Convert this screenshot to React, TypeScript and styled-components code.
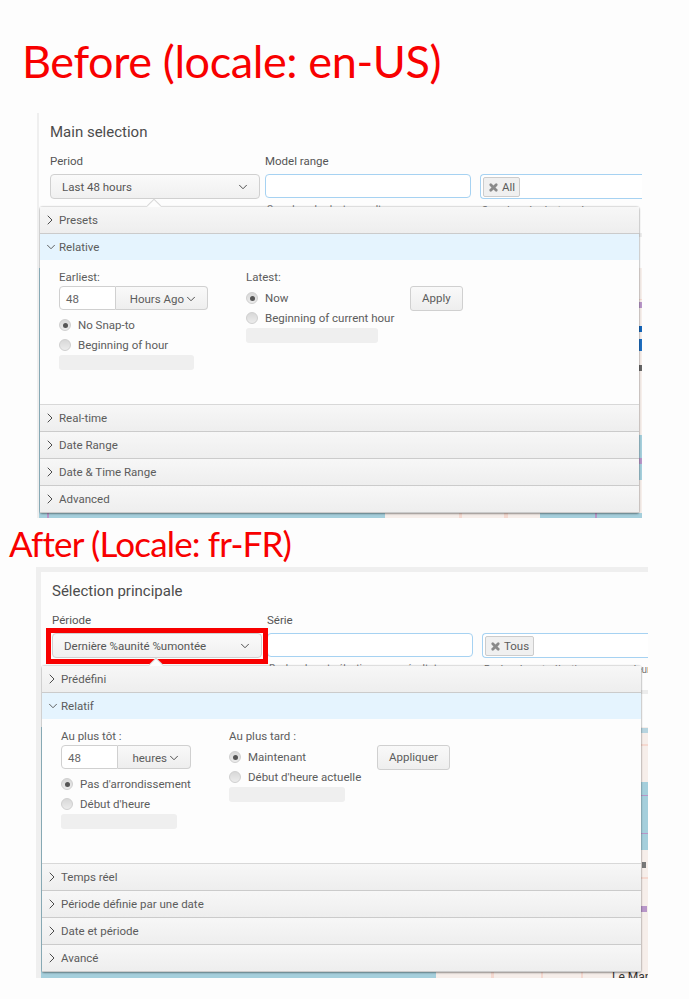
import React from 'react';
import styled, {createGlobalStyle} from 'styled-components';
import {ChevronDown, ChevronRight, X} from 'lucide-react';

const GlobalStyle = createGlobalStyle`
    html, body {
        margin: 0;
        padding: 0;
        background: #fdfdfd;
    }`;

const Page = styled.div`
    width: 689px;
    height: 999px;
    overflow: hidden;
    display: flex;
    flex-direction: column;
    font-family: Roboto, "Liberation Sans", sans-serif;
    font-size: 12px;
    color: #5a5a5a;`;

const Heading = styled.h1<{$size: number, $spacing: number, $indent: number, $height: number, $drop: number}>`
    box-sizing: border-box;
    margin: 0;
    height: ${p => p.$height}px;
    padding: ${p => p.$drop}px 0 0 ${p => p.$indent}px;
    display: flex;
    align-items: center;
    font-family: Lato, "Open Sans", sans-serif;
    font-weight: 400;
    font-size: ${p => p.$size}px;
    letter-spacing: ${p => p.$spacing}px;
    color: #f80000;
    white-space: nowrap;`;

const Panel = styled.section<{$left: number, $width: number, $height: number, $frameTop: number, $frameLeft: number}>`
    position: relative;
    box-sizing: border-box;
    margin-left: ${p => p.$left}px;
    width: ${p => p.$width}px;
    height: ${p => p.$height}px;
    flex: none;
    overflow: hidden;
    border-top: ${p => p.$frameTop}px solid #efefef;
    border-left: ${p => p.$frameLeft}px solid #efefef;
    background: #fdfdfd;`;

const MapBackdrop = styled.svg`
    position: absolute;
    left: 0;
    top: 0;`;

const Form = styled.div`
    position: relative;
    padding: 9px 0 0 11px;`;

const Title = styled.h2`
    margin: 0;
    height: 20px;
    line-height: 20px;
    font-size: 15px;
    font-weight: 400;
    color: #4c4c4c;`;

const Fields = styled.div`
    display: flex;
    margin-top: 11px;`;

const Field = styled.div<{$width: number, $gap: number}>`
    flex: none;
    width: ${p => p.$width}px;
    margin-right: ${p => p.$gap}px;`;

const FieldLabel = styled.div`
    height: 21px;
    line-height: 16px;
    font-size: 11.5px;
    color: #555;
    white-space: nowrap;`;

const Hint = styled.div`
    margin-top: 6px;
    padding-left: 2px;
    font-size: 10px;
    color: #777;
    white-space: nowrap;`;

const PeriodSelect = styled.div<{$highlight?: boolean}>`
    position: relative;
    box-sizing: border-box;
    height: 25px;
    padding: 0 9px 0 11px;
    display: flex;
    align-items: center;
    justify-content: space-between;
    border: 1px solid #d0d0d0;
    border-radius: 4px;
    background: linear-gradient(#fafafa, #f0f0f0);
    color: #565656;
    font-size: 11.5px;

    svg {
        color: #444;
    }

    ${p => p.$highlight ? `
    &::after {
        content: '';
        position: absolute;
        inset: -6px -7px -7px -7px;
        border: 5px solid #f80000;
    }` : ''}`;

const TextBox = styled.div`
    box-sizing: border-box;
    height: 24px;
    border: 1px solid #a6d2f2;
    border-radius: 4px;
    background: #fff;`;

const TagBox = styled.div`
    box-sizing: border-box;
    height: 25px;
    width: 200px;
    padding: 2px;
    border: 1px solid #a6d2f2;
    border-right: 0;
    border-radius: 4px 0 0 4px;
    background: #fff;`;

const Tag = styled.span`
    box-sizing: border-box;
    height: 20px;
    padding: 0 4px;
    display: inline-flex;
    align-items: center;
    gap: 3px;
    border: 1px solid #ccc;
    border-radius: 2px;
    background: #f0f0f0;
    color: #5c5c5c;
    font-size: 11.5px;`;

const Popover = styled.div`
    position: absolute;
    left: 1px;
    top: 94px;
    width: 599px;
    height: 306px;
    display: flex;
    flex-direction: column;
    background: #fdfdfd;
    border-radius: 2px;
    box-shadow: 0 0 2px rgba(0, 0, 0, 0.4), 0 1px 2px rgba(0, 0, 0, 0.3);

    &::before {
        content: '';
        position: absolute;
        left: 109px;
        top: -5px;
        width: 10px;
        height: 10px;
        transform: rotate(45deg);
        background: #fdfdfd;
        box-shadow: -1px -1px 0 #d8d8d8;
    }`;

const SectionRow = styled.div<{$open?: boolean}>`
    position: relative;
    box-sizing: border-box;
    flex: none;
    height: ${p => p.$open ? 26 : 27}px;
    padding-left: 2px;
    display: flex;
    align-items: center;
    border-bottom: ${p => p.$open ? '0' : '1px solid #cbcbcb'};
    background: ${p => p.$open ? '#e5f4fe' : 'linear-gradient(#f7f7f7, #eeeeee)'};
    color: #5c5c5c;
    font-size: 11.5px;`;

const RowIcon = styled.span<{$shift?: number}>`
    width: 17px;
    display: flex;
    padding-left: ${p => p.$shift ?? 0}px;
    box-sizing: border-box;
    color: #4c4c4c;`;

const Relative = styled.div<{$columns: string}>`
    flex: 1;
    box-sizing: border-box;
    padding: 11px 0 0 19px;
    display: grid;
    grid-template-columns: ${p => p.$columns};
    align-items: start;
    border-bottom: 1px solid #d8d8d8;`;

const Column = styled.div`
    display: flex;
    flex-direction: column;`;

const ColumnLabel = styled.div<{$below: number}>`
    height: 15px;
    margin-bottom: ${p => p.$below}px;
    line-height: 12px;
    font-size: 11.5px;
    color: #5c5c5c;
    white-space: nowrap;`;

const AmountGroup = styled.div`
    display: flex;
    height: 24px;
    margin-bottom: 5px;`;

const AmountInput = styled.div`
    box-sizing: border-box;
    width: 57px;
    padding: 1px 0 0 6px;
    line-height: 22px;
    border: 1px solid #d0d0d0;
    border-radius: 4px 0 0 4px;
    background: #fff;
    font-size: 11.5px;
    color: #666;`;

const UnitSelect = styled.div<{$width: number}>`
    box-sizing: border-box;
    width: ${p => p.$width}px;
    padding: 1px 9px 0 0;
    display: flex;
    align-items: center;
    justify-content: flex-end;
    border: 1px solid #d0d0d0;
    border-left: 0;
    border-radius: 0 4px 4px 0;
    background: linear-gradient(#f9f9f9, #eeeeee);
    font-size: 11.5px;
    color: #5c5c5c;

    svg {
        color: #444;
    }`;

const RadioRow = styled.div`
    height: 20px;
    display: flex;
    align-items: center;
    gap: 7px;
    font-size: 11.5px;
    color: #5c5c5c;
    white-space: nowrap;`;

const RadioDot = styled.span<{$checked?: boolean}>`
    position: relative;
    flex: none;
    width: 12px;
    height: 12px;
    border-radius: 50%;
    border: 1px solid #cfcfcf;
    box-sizing: border-box;
    background: linear-gradient(#d8d8d8, #ececec);

    &::after {
        content: '';
        display: ${p => p.$checked ? 'block' : 'none'};
        position: absolute;
        left: 2.5px;
        top: 2.5px;
        width: 5px;
        height: 5px;
        border-radius: 50%;
        background: #555;
    }`;

const Placeholder = styled.div<{$width: number}>`
    width: ${p => p.$width}px;
    height: 15px;
    border-radius: 3px;
    background: #efefef;`;

const ApplyButton = styled.div`
    justify-self: start;
    box-sizing: border-box;
    height: 25px;
    margin-top: 15px;
    padding: 0 11px;
    line-height: 23px;
    border: 1px solid #d0d0d0;
    border-radius: 3px;
    background: linear-gradient(#f9f9f9, #eeeeee);
    font-size: 11.5px;
    color: #5c5c5c;`;

interface MapPatch {
    x: number,
    y: number,
    w: number,
    h: number,
    color: string
}

interface PanelContent {
    title: string,
    periodLabel: string,
    period: string,
    series: string,
    tag: string,
    seriesHint: string,
    tagHint: string,
    sections: string[],
    relative: string,
    earliest: string,
    unit: string,
    unitWidth: number,
    noSnap: string,
    beginHour: string,
    latest: string,
    now: string,
    beginCurrent: string,
    apply: string,
    columns: string,
    snapBar: number,
    latestBar: number
}

const water = '#a5cfdc';
const land = '#f6eeea';
const road = '#f5d9d0';
const border = '#b896c8';

const beforeMap: MapPatch[] = [
    {x: 0, y: 155, w: 1, h: 250, color: water},
    {x: 600, y: 120, w: 3, h: 4, color: '#ececec'},
    {x: 600, y: 155, w: 3, h: 167, color: land},
    {x: 600, y: 186, w: 3, h: 1, color: road},
    {x: 600, y: 189, w: 3, h: 6, color: border},
    {x: 600, y: 213, w: 3, h: 6, color: '#1565b8'},
    {x: 600, y: 226, w: 3, h: 12, color: '#1f6fc0'},
    {x: 600, y: 252, w: 3, h: 6, color: '#666'},
    {x: 600, y: 322, w: 3, h: 45, color: water},
    {x: 600, y: 345, w: 3, h: 6, color: border},
    {x: 600, y: 367, w: 3, h: 33, color: land},
    {x: 0, y: 400, w: 346, h: 5, color: water},
    {x: 8, y: 400, w: 2, h: 5, color: border},
    {x: 346, y: 400, w: 155, h: 5, color: land},
    {x: 420, y: 400, w: 3, h: 5, color: road},
    {x: 465, y: 400, w: 4, h: 5, color: road},
    {x: 501, y: 400, w: 102, h: 5, color: water},
    {x: 556, y: 400, w: 2, h: 5, color: border}
];

const afterMap: MapPatch[] = [
    {x: 0, y: 155, w: 1, h: 251, color: water},
    {x: 600, y: 118, w: 7, h: 4, color: '#ececec'},
    {x: 600, y: 155, w: 7, h: 55, color: land},
    {x: 600, y: 156, w: 7, h: 5, color: '#b7d4df'},
    {x: 600, y: 172, w: 7, h: 2, color: road},
    {x: 600, y: 210, w: 7, h: 68, color: water},
    {x: 600, y: 223, w: 7, h: 1, color: border},
    {x: 600, y: 261, w: 7, h: 1, color: border},
    {x: 600, y: 278, w: 7, h: 128, color: land},
    {x: 601, y: 290, w: 4, h: 6, color: '#777'},
    {x: 600, y: 305, w: 7, h: 2, color: road},
    {x: 600, y: 334, w: 6, h: 6, color: border},
    {x: 0, y: 400, w: 395, h: 6, color: water},
    {x: 395, y: 400, w: 212, h: 6, color: land},
    {x: 450, y: 400, w: 3, h: 6, color: road},
    {x: 500, y: 400, w: 2, h: 6, color: road},
    {x: 540, y: 400, w: 2, h: 6, color: road}
];

const before: PanelContent = {
    title: 'Main selection',
    periodLabel: 'Period',
    period: 'Last 48 hours',
    series: 'Model range',
    tag: 'All',
    seriesHint: 'Search and select a result',
    tagHint: 'Search and select a value',
    sections: ['Presets', 'Real-time', 'Date Range', 'Date & Time Range', 'Advanced'],
    relative: 'Relative',
    earliest: 'Earliest:',
    unit: 'Hours Ago',
    unitWidth: 92,
    noSnap: 'No Snap-to',
    beginHour: 'Beginning of hour',
    latest: 'Latest:',
    now: 'Now',
    beginCurrent: 'Beginning of current hour',
    apply: 'Apply',
    columns: '187px 164px 1fr',
    snapBar: 135,
    latestBar: 132
};

const after: PanelContent = {
    title: 'Sélection principale',
    periodLabel: 'Période',
    period: 'Dernière %aunité %umontée',
    series: 'Série',
    tag: 'Tous',
    seriesHint: 'Rechercher et sélectionner un résultat',
    tagHint: 'Rechercher et sélectionner une valeur du modèle',
    sections: ['Prédéfini', 'Temps réel', 'Période définie par une date', 'Date et période', 'Avancé'],
    relative: 'Relatif',
    earliest: 'Au plus tôt :',
    unit: 'heures',
    unitWidth: 73,
    noSnap: "Pas d'arrondissement",
    beginHour: "Début d'heure",
    latest: 'Au plus tard :',
    now: 'Maintenant',
    beginCurrent: "Début d'heure actuelle",
    apply: 'Appliquer',
    columns: '168px 148px 1fr',
    snapBar: 116,
    latestBar: 116
};

const MapLayer = ({patches, label}: {patches: MapPatch[], label?: string}) => (
    <MapBackdrop width="607" height="406" viewBox="0 0 607 406">
        {patches.map((patch, i) => (
            <rect key={i} x={patch.x} y={patch.y} width={patch.w} height={patch.h} fill={patch.color} />
        ))}
        {label && <text x="571" y="409" fontSize="12" fontFamily="Roboto, sans-serif" fill="#333">{label}</text>}
    </MapBackdrop>
);

const Section = ({label}: {label: string}) => (
    <SectionRow>
        <RowIcon><ChevronRight size={16} strokeWidth={1.5} /></RowIcon>
        {label}
    </SectionRow>
);

const SelectionPanel = ({content, highlight}: {content: PanelContent, highlight?: boolean}) => (
    <>
        <Form>
            <Title>{content.title}</Title>
            <Fields>
                <Field $width={210} $gap={5}>
                    <FieldLabel>{content.periodLabel}</FieldLabel>
                    <PeriodSelect $highlight={highlight}>
                        {content.period}
                        <ChevronDown size={14} strokeWidth={1.6} />
                    </PeriodSelect>
                </Field>
                <Field $width={206} $gap={9}>
                    <FieldLabel>{content.series}</FieldLabel>
                    <TextBox />
                    <Hint>{content.seriesHint}</Hint>
                </Field>
                <Field $width={200} $gap={0}>
                    <FieldLabel>&nbsp;</FieldLabel>
                    <TagBox>
                        <Tag><X size={11} strokeWidth={6} color="#8a8a8a" />{content.tag}</Tag>
                    </TagBox>
                    <Hint>{content.tagHint}</Hint>
                </Field>
            </Fields>
        </Form>
        <Popover>
            <Section label={content.sections[0]} />
            <SectionRow $open>
                <RowIcon $shift={2}><ChevronDown size={14} strokeWidth={1.5} /></RowIcon>
                {content.relative}
            </SectionRow>
            <Relative $columns={content.columns}>
                <Column>
                    <ColumnLabel $below={0}>{content.earliest}</ColumnLabel>
                    <AmountGroup>
                        <AmountInput>48</AmountInput>
                        <UnitSelect $width={content.unitWidth}>
                            {content.unit}
                            <ChevronDown size={14} strokeWidth={1.6} />
                        </UnitSelect>
                    </AmountGroup>
                    <RadioRow><RadioDot $checked />{content.noSnap}</RadioRow>
                    <RadioRow><RadioDot />{content.beginHour}</RadioRow>
                    <Placeholder $width={content.snapBar} />
                </Column>
                <Column>
                    <ColumnLabel $below={2}>{content.latest}</ColumnLabel>
                    <RadioRow><RadioDot $checked />{content.now}</RadioRow>
                    <RadioRow><RadioDot />{content.beginCurrent}</RadioRow>
                    <Placeholder $width={content.latestBar} />
                </Column>
                <ApplyButton>{content.apply}</ApplyButton>
            </Relative>
            {content.sections.slice(1).map(label => <Section key={label} label={label} />)}
        </Popover>
    </>
);

const App = () => (
    <Page>
        <GlobalStyle />
        <Heading $size={45} $spacing={-0.4} $indent={22} $height={113} $drop={8}>Before (locale: en-US)</Heading>
        <Panel $left={37} $width={605} $height={405} $frameTop={0} $frameLeft={2}>
            <MapLayer patches={beforeMap} />
            <SelectionPanel content={before} />
        </Panel>
        <Heading $size={35} $spacing={-0.85} $indent={9} $height={49} $drop={0}>After (Locale: fr-FR)</Heading>
        <Panel $left={36} $width={612} $height={411} $frameTop={5} $frameLeft={5}>
            <MapLayer patches={afterMap} label="Le Mans" />
            <SelectionPanel content={after} highlight />
        </Panel>
    </Page>
);

export default App;
